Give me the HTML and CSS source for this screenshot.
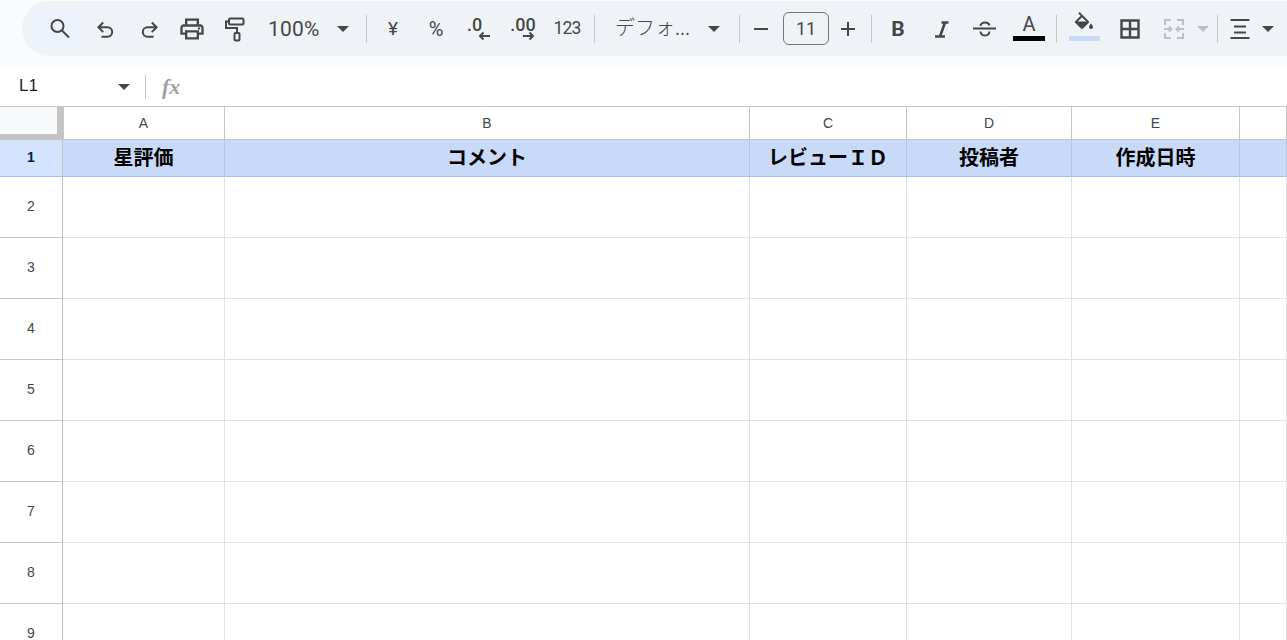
FILE: index.html
```html
<!DOCTYPE html>
<html lang="ja">
<head>
<meta charset="utf-8">
<title>Sheet</title>
<link rel="stylesheet" href="styles.css">
</head>
<body>
<header class="toolbar-wrap">
  <div class="toolbar">
    <div class="btn search"><svg width="28" height="28" viewBox="0 0 28 28"><circle cx="11.5" cy="11" r="6" class="ln"/><path d="M16 15.5l7 7" class="ln"/></svg></div>
    <div class="btn undo"><svg width="24" height="24" viewBox="0 0 24 24"><path d="M9.2 5.5L4.4 10.3l4.8 4.8M4.4 10.3H13.500a4.700 4.700 0 0 1 0 9.400H7.500" class="ln"/></svg></div>
    <div class="btn redo"><svg width="24" height="24" viewBox="0 0 24 24"><path d="M14.800 5.500l4.800 4.800-4.800 4.800M19.600 10.300H10.500a4.700 4.700 0 0 0 0 9.400H16.500" class="ln"/></svg></div>
    <div class="btn print"><svg width="28" height="28" viewBox="0 0 24 24"><path class="fl" d="M19 8h-1V3H6v5H5c-1.660 0-3 1.340-3 3v6h4v4h12v-4h4v-6c0-1.660-1.340-3-3-3zM8 5h8v3H8V5zm8 12v2H8v-4h8v2zm2-2v-2H6v2H4v-4c0-.550.450-1 1-1h14c.550 0 1 .450 1 1v4h-2z"/><circle class="fl" cx="18" cy="11.500" r="1"/></svg></div>
    <div class="btn paint"><svg width="28" height="28" viewBox="0 0 28 28"><path class="ln" d="M7 4.500a1 1 0 0 1 1-1h12.500a1 1 0 0 1 1 1v4a1 1 0 0 1-1 1H8a1 1 0 0 1-1-1zM7 6.500H4v6.500h11v4.500"/><rect class="ln" x="12.500" y="18" width="5" height="7.500" rx="1"/></svg></div>
    <div class="zoom-val">100%</div>
    <div class="caret-box zoom-caret"><span class="caret"></span></div>
    <div class="sep"></div>
    <div class="btn yen">¥</div>
    <div class="btn pct">%</div>
    <div class="btn dec"><span class="dec-text">.0</span><svg class="dec-arrow" width="14" height="10" viewBox="0 0 14 10"><path class="ln" d="M12 5H2M5.500 1.500L2 5l3.500 3.500"/></svg></div>
    <div class="btn inc"><span class="dec-text">.00</span><svg class="dec-arrow" width="14" height="10" viewBox="0 0 14 10"><path class="ln" d="M2 5h10M8.500 1.500L12 5 8.500 8.500"/></svg></div>
    <div class="btn num">123</div>
    <div class="sep sep-font"></div>
    <div class="font-name">デフォ...</div>
    <div class="caret-box font-caret"><span class="caret"></span></div>
    <div class="sep"></div>
    <div class="btn minus"><svg width="16" height="4" viewBox="0 0 16 4"><path class="ln" d="M1 2h14"/></svg></div>
    <div class="size-box">11</div>
    <div class="btn plus"><svg width="16" height="16" viewBox="0 0 16 16"><path class="ln" d="M1 8h14M8 1v14"/></svg></div>
    <div class="sep sep-plus"></div>
    <div class="btn bold">B</div>
    <div class="btn italic"><svg width="24" height="24" viewBox="0 0 24 24"><path class="ln thick" d="M12.500 5.500h7M6 19.500h10M16 5.500l-5 14"/></svg></div>
    <div class="btn strike"><svg width="26" height="24" viewBox="0 0 26 24"><path class="ln" d="M1 11.500h23M8.500 9c0-2 2-3.500 4.500-3.500s4 1 4.500 3M8.500 14.500c.3 2.500 2 4 4.500 4s4.200-1.500 4.500-4"/></svg></div>
    <div class="btn color"><span class="color-a">A</span><span class="color-bar"></span></div>
    <div class="sep sep-color"></div>
    <div class="btn fill"><svg width="24" height="24" viewBox="0 0 24 24"><path class="fl" d="M16.560 8.940L7.620 0 6.210 1.410l2.380 2.380-5.150 5.150c-.59.59-.59 1.540 0 2.120l5.500 5.500c.29.29.68.44 1.060.44s.77-.15 1.060-.44l5.500-5.500c.59-.58.59-1.530 0-2.120zM5.210 10L10 5.210 14.790 10H5.210zM19 11.500s-2 2.170-2 3.500c0 1.100.9 2 2 2s2-.9 2-2c0-1.330-2-3.500-2-3.500z"/><path class="fl" d="M5 9.500h10.500L10 15z"/></svg><span class="fill-bar"></span></div>
    <div class="btn borders"><svg width="24" height="24" viewBox="0 0 24 24"><path class="ln bd" d="M3.500 3.500h17v17h-17zM12 3.500v17M3.500 12h17"/></svg></div>
    <div class="btn merge"><svg width="24" height="24" viewBox="0 0 24 24"><path class="ln off" d="M9 3H3v5M15 3h6v5M9 21H3v-5M15 21h6v-5M2 12h7.500M7 9.500L9.500 12 7 14.500M22 12h-7.500M17 9.500L14.500 12l2.500 2.500"/></svg></div>
    <div class="caret-box merge-caret"><span class="caret caret-off"></span></div>
    <div class="sep sep-merge"></div>
    <div class="btn align"><svg width="22" height="22" viewBox="0 0 22 22"><path class="ln" d="M1.500 2h19M5 8.500h12M5 14.500h12M1.500 20h19"/></svg></div>
    <div class="caret-box align-caret"><span class="caret"></span></div>
  </div>
</header>

<div class="formula-bar">
  <div class="name-box">L1</div>
  <div class="caret-box name-caret"><span class="caret"></span></div>
  <div class="sep fx-sep"></div>
  <div class="fx">fx</div>
</div>

<main class="sheet">
  <div class="corner"></div>
  <div class="col-h">A</div><div class="col-h">B</div><div class="col-h">C</div><div class="col-h">D</div><div class="col-h">E</div><div class="col-h"></div>

  <div class="row-h row-sel">1</div>
  <div class="hd">星評価</div><div class="hd">コメント</div><div class="hd">レビューＩＤ</div><div class="hd">投稿者</div><div class="hd">作成日時</div><div class="hd"></div>

  <div class="row-h">2</div><div class="c"></div><div class="c"></div><div class="c"></div><div class="c"></div><div class="c"></div><div class="c"></div>
  <div class="row-h">3</div><div class="c"></div><div class="c"></div><div class="c"></div><div class="c"></div><div class="c"></div><div class="c"></div>
  <div class="row-h">4</div><div class="c"></div><div class="c"></div><div class="c"></div><div class="c"></div><div class="c"></div><div class="c"></div>
  <div class="row-h">5</div><div class="c"></div><div class="c"></div><div class="c"></div><div class="c"></div><div class="c"></div><div class="c"></div>
  <div class="row-h">6</div><div class="c"></div><div class="c"></div><div class="c"></div><div class="c"></div><div class="c"></div><div class="c"></div>
  <div class="row-h">7</div><div class="c"></div><div class="c"></div><div class="c"></div><div class="c"></div><div class="c"></div><div class="c"></div>
  <div class="row-h">8</div><div class="c"></div><div class="c"></div><div class="c"></div><div class="c"></div><div class="c"></div><div class="c"></div>
  <div class="row-h">9</div><div class="c"></div><div class="c"></div><div class="c"></div><div class="c"></div><div class="c"></div><div class="c"></div>
</main>
</body>
</html>
```
FILE: styles.css
```css
* { box-sizing: border-box; }
html, body { margin: 0; padding: 0; height: 640px; overflow: hidden; background: #fff; }
body { font-family: Roboto, "Noto Sans CJK JP", sans-serif; color: #444746; }

.toolbar-wrap { height: 67px; background: #f9fbfd; padding: 1px 0 0 22px; }
.toolbar {
  height: 55px; background: #eff3f8; border-radius: 28px 0 0 28px;
  padding-left: 12px; display: flex; align-items: center; overflow: hidden;
}
.ln { fill: none; stroke: #444746; stroke-width: 2; }
.thick { stroke-width: 2.6; }
.bd { stroke-width: 2.4; }
.off { stroke: #bdc1c6; }
.fl { fill: #444746; }

.btn {
  flex: none; width: 42px; height: 39px; display: flex; align-items: center;
  justify-content: center; position: relative; font-size: 18px;
}
.search { width: 51px; background: #edf2fa; }
.redo { width: 43px; }
.print, .paint { width: 44px; }
.zoom-val { flex: none; margin-left: 10px; width: 51px; font-size: 21px; letter-spacing: .2px; }
.caret-box { flex: none; display: flex; align-items: center; justify-content: center; }
.caret { width: 0; height: 0; border: 6px solid transparent; border-bottom: 0; border-top-color: #444746; }
.caret-off { border-top-color: #bdc1c6; }
.zoom-caret { width: 47px; }
.sep { flex: none; width: 1px; height: 28px; background: #c7c7c7; }

.yen { margin-left: 5px; font-size: 19px; }
.pct { width: 44px; font-size: 20px; }
.dec, .inc { flex-direction: column; font-weight: 500; font-size: 18px; }
.inc { width: 44px; }
.dec-text { line-height: 15px; margin-top: -9px; position: relative; }
.dec-arrow { position: absolute; left: 20px; top: 22px; }
.inc .dec-arrow { left: 21px; }
.dec .dec-text { left: -4.5px; }
.inc .dec-text { left: 1px; }
.num { width: 46px; font-size: 17.5px; letter-spacing: -.8px; padding-bottom: 2px; }
.sep-font { margin-left: 4px; }
.font-name { flex: none; margin: 0 0 4px 20px; width: 73px; font-size: 20px; font-family: "Noto Sans CJK JP", sans-serif; font-weight: 300; line-height: 28px; white-space: nowrap; }
.font-caret { width: 51px; }
.size-box {
  flex: none; width: 46px; height: 33px; margin-left: 1px; border: 1px solid #747775;
  border-radius: 6px; display: flex; align-items: center; justify-content: center; font-size: 18px;
}
.plus { width: 38px; }
.sep-plus { margin-left: 4px; }
.bold { margin-left: 5px; font-size: 21px; font-weight: 700; }
.italic { margin-left: 1px; }
.strike, .color { margin-left: 2px; }
.color { flex-direction: column; }
.color-a { font-size: 20px; font-weight: 400; line-height: 22px; margin-top: -4px; }
.color-bar { width: 32px; height: 5px; background: #000; margin-top: 1px; }
.sep-color { margin-left: 6px; }
.fill { margin-left: 6px; flex-direction: column; }
.fill svg { margin-top: -4px; }
.fill-bar { width: 31px; height: 5px; background: #c9daf8; }
.borders { margin-left: 4px; }
.merge { margin-left: 2px; }
.merge-caret { width: 16px; }
.sep-merge { margin-left: 6px; }
.align { width: 44px; }
.align-caret { width: 12px; }

.formula-bar { height: 39px; display: flex; align-items: center; background: #fff; padding-left: 19px; }
.name-box { flex: none; width: 90px; font: 17px "Liberation Sans", sans-serif; color: #1f1f1f; margin-bottom: 2px; }
.name-caret { width: 30px; }
.fx-sep { margin-left: 6px; height: 24px; }
.fx { margin-left: 16px; font: italic 700 22px "Liberation Serif", serif; color: #a0a0a0; }

.sheet {
  display: grid;
  grid-template-columns: 63px 162px 525px 157px 165px 168px 1fr;
  grid-template-rows: 33px 37px repeat(8, 61px);
  border-top: 1px solid #c7c7c7;
  height: 534px;
  overflow: hidden;
}
.corner { background: #f8f9fa; border-right: 6px solid #c4c4c4; border-bottom: 6px solid #c4c4c4; box-shadow: 1px 0 0 #c7c7c7; }
.col-h {
  border-right: 1px solid #c7c7c7; border-bottom: 1px solid #c7c7c7;
  display: flex; align-items: center; justify-content: center; font: 14px "Liberation Sans", sans-serif; color: #444746;
}
.row-h {
  border-right: 1px solid #c0c0c0; border-bottom: 1px solid #c7c7c7; padding-bottom: 2px;
  display: flex; align-items: center; justify-content: center; font: 14px "Liberation Sans", sans-serif; color: #444746;
}
.row-sel { background: #d3e3fd; color: #041e49; font-weight: 700; border-bottom-color: #a8c0e8; }
.hd {
  background: #c9daf8; border-right: 1px solid #b7c8e4; border-bottom: 1px solid #a8c0e8; padding-bottom: 4px;
  display: flex; align-items: center; justify-content: center;
  font: 700 20px "Noto Sans CJK JP", sans-serif; color: #000; white-space: nowrap;
}
.c { border-right: 1px solid #e1e1e1; border-bottom: 1px solid #e1e1e1; }
```
